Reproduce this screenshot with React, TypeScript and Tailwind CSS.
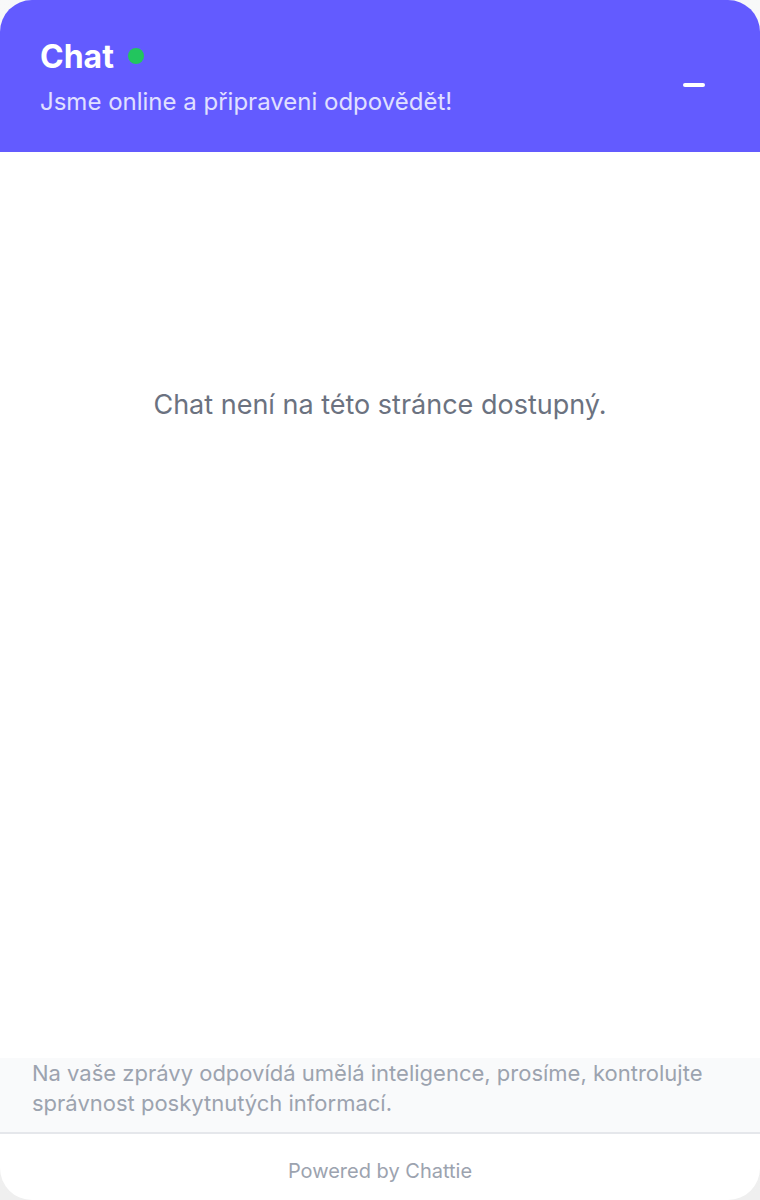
export default function App() {
  return (
    <div className="min-h-screen bg-linear-to-b from-[#f8f9f9] to-[#efefef] font-['Inter','Liberation_Sans',sans-serif]">
      <section className="flex min-h-screen flex-col overflow-hidden rounded-[32px] bg-white">
        <header className="flex items-center justify-between bg-[#635bff] px-10 pt-9 pb-8 text-white">
          <div>
            <div className="flex items-center gap-3.5">
              <h1 className="pt-0.5 text-[32px] leading-[38px] font-bold">Chat</h1>
              <span className="size-4 rounded-full bg-[#22c55e]" />
            </div>
            <p className="mt-2 text-[24px] leading-9 text-[#e0e0ff]">Jsme online a připraveni odpovědět!</p>
          </div>
          <button type="button" aria-label="Minimalizovat" className="flex size-13 items-center justify-center">
            <svg viewBox="0 0 32 32" className="size-8" fill="none" aria-hidden="true">
              <path d="M7 23H25" stroke="currentColor" strokeWidth="4" strokeLinecap="round" />
            </svg>
          </button>
        </header>
        <main className="flex-1 px-8 pt-58 text-center">
          <p className="text-[27px] leading-[42px] text-[#6b7280]">Chat není na této stránce dostupný.</p>
        </main>
        <p className="border-b-2 border-[#e5e7eb] bg-[#f9fafb] px-8 pb-3.5 text-[22px] leading-[30px] text-[#9ca3af]">
          Na vaše zprávy odpovídá umělá inteligence, prosíme, kontrolujte správnost poskytnutých informací.
        </p>
        <footer className="flex h-[66px] items-center justify-center pt-2 text-[20px] leading-7 text-[#9ca3af]">
          Powered by Chattie
        </footer>
      </section>
    </div>
  );
}
